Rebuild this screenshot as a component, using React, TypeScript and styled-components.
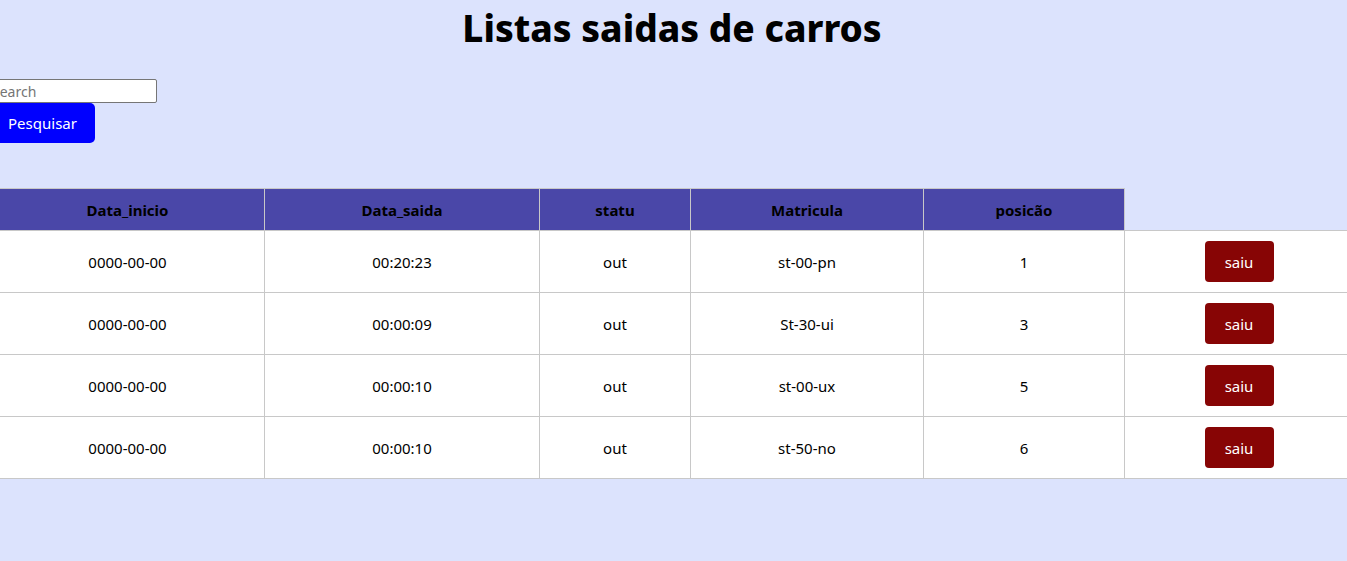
import React from "react";
import styled, { createGlobalStyle } from "styled-components";

const GlobalStyle = createGlobalStyle`
  html, body {
    margin: 0;
    padding: 0;
    background: #dce3fd;
    overflow: hidden;
  }
  body {
    font-family: "Noto Sans", "Open Sans", sans-serif;
    color: #000;
  }
`;

const Page = styled.div`
  width: 1364px;
  margin-left: -10px;
  display: flex;
  flex-direction: column;
`;

const Title = styled.h1`
  margin: 6px 0 29px;
  text-align: center;
  font-size: 37px;
  line-height: 44px;
  font-weight: 800;
`;

const SearchForm = styled.form`
  display: flex;
  flex-direction: column;
  align-items: flex-start;
  margin-bottom: 45px;
`;

const SearchInput = styled.input`
  box-sizing: border-box;
  width: 167px;
  height: 24px;
  padding: 1px 2px;
  border: 1px solid #767676;
  border-radius: 2px;
  background: #fff;
  font-family: "Noto Sans", sans-serif;
  font-size: 14px;
  &::placeholder {
    color: #757575;
  }
`;

const SearchButton = styled.button`
  box-sizing: border-box;
  width: 105px;
  height: 40px;
  border: none;
  border-radius: 5px;
  background: #0000ff;
  color: #fff;
  font-family: "Noto Sans", sans-serif;
  font-size: 15px;
  cursor: pointer;
`;

const Table = styled.table`
  width: 1364px;
  border-collapse: collapse;
  table-layout: fixed;
`;

const HeadCell = styled.th<{ $w?: number; $empty?: boolean }>`
  width: ${(p) => (p.$w ? `${p.$w}px` : "auto")};
  height: 41px;
  padding: 0;
  background: ${(p) => (p.$empty ? "transparent" : "#4a47a8")};
  border: ${(p) => (p.$empty ? "none" : "1px solid #c8c8c8")};
  font-size: 15px;
  font-weight: 700;
  color: #000;
  text-align: center;
`;

const Row = styled.tr`
  background: #fff;
`;

const Cell = styled.td`
  height: 61px;
  padding: 0;
  border: 1px solid #c8c8c8;
  font-size: 15px;
  text-align: center;
  color: #000;
`;

const ExitButton = styled.button`
  width: 69px;
  height: 41px;
  border: none;
  border-radius: 4px;
  background: #870505;
  color: #fff;
  font-family: "Noto Sans", sans-serif;
  font-size: 15px;
  cursor: pointer;
`;

const columns: { label: string; w?: number }[] = [
  { label: "Data_inicio", w: 273 },
  { label: "Data_saida", w: 274 },
  { label: "statu", w: 150 },
  { label: "Matricula", w: 232 },
  { label: "posicão", w: 200 },
  { label: "" },
];

const rows = [
  { inicio: "0000-00-00", saida: "00:20:23", statu: "out", mat: "st-00-pn", pos: "1" },
  { inicio: "0000-00-00", saida: "00:00:09", statu: "out", mat: "St-30-ui", pos: "3" },
  { inicio: "0000-00-00", saida: "00:00:10", statu: "out", mat: "st-00-ux", pos: "5" },
  { inicio: "0000-00-00", saida: "00:00:10", statu: "out", mat: "st-50-no", pos: "6" },
];

export default function App() {
  return (
    <>
      <GlobalStyle />
      <Page>
        <Title>Listas saidas de carros</Title>
        <SearchForm onSubmit={(e) => e.preventDefault()}>
          <SearchInput type="text" placeholder="search" />
          <SearchButton type="submit">Pesquisar</SearchButton>
        </SearchForm>
        <Table>
          <thead>
            <tr>
              {columns.map((c, i) => (
                <HeadCell key={i} $w={c.w} $empty={!c.label}>
                  {c.label}
                </HeadCell>
              ))}
            </tr>
          </thead>
          <tbody>
            {rows.map((r, i) => (
              <Row key={i}>
                <Cell>{r.inicio}</Cell>
                <Cell>{r.saida}</Cell>
                <Cell>{r.statu}</Cell>
                <Cell>{r.mat}</Cell>
                <Cell>{r.pos}</Cell>
                <Cell>
                  <ExitButton type="button">saiu</ExitButton>
                </Cell>
              </Row>
            ))}
          </tbody>
        </Table>
      </Page>
    </>
  );
}
